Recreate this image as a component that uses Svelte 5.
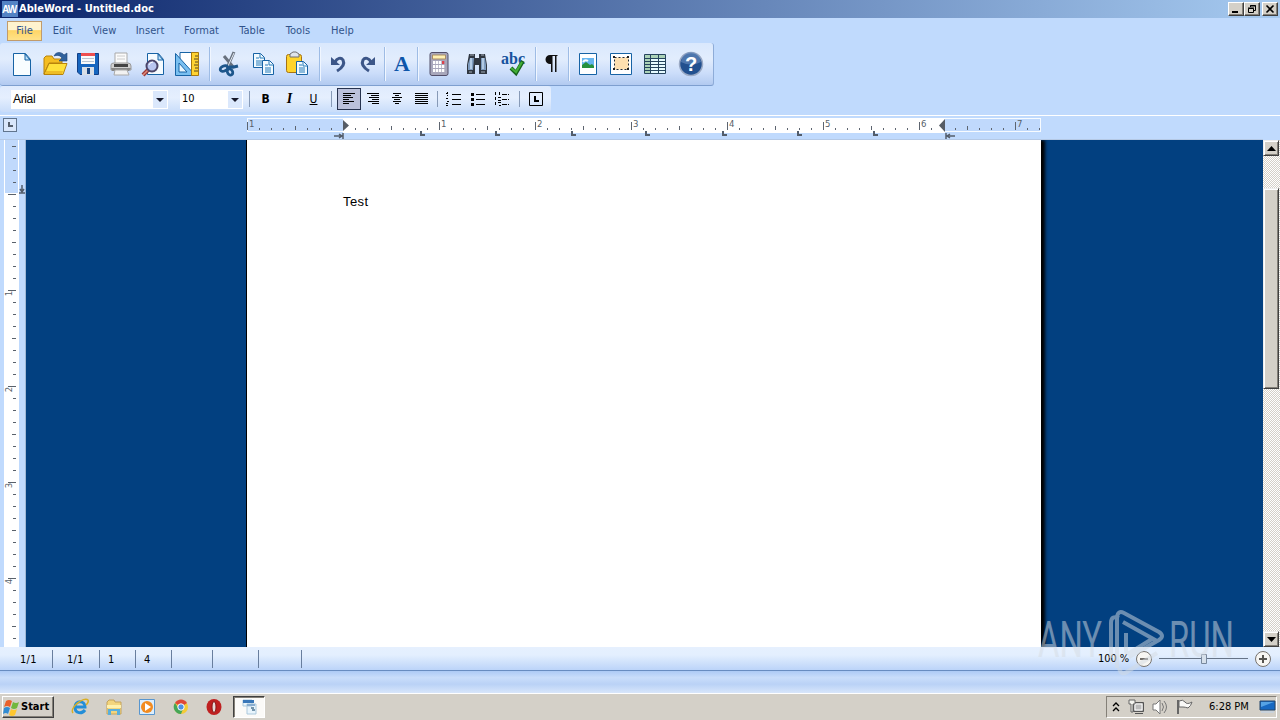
<script lang="ts">
    const menus = [
        { label: 'File', width: 35 },
        { label: 'Edit', width: 41 },
        { label: 'View', width: 43 },
        { label: 'Insert', width: 48 },
        { label: 'Format', width: 55 },
        { label: 'Table', width: 46 },
        { label: 'Tools', width: 46 },
        { label: 'Help', width: 43 }
    ];

    const tools: [string, number][] = [
        ['new', 32], ['open', 34], ['save', 32], ['print', 34], ['preview', 30], ['layout', 38],
        ['sep', 8], ['cut', 32], ['copy', 34], ['paste', 34],
        ['sep', 12], ['undo', 26], ['redo', 30],
        ['sep', 6], ['font', 28],
        ['sep', 4], ['calc', 38], ['find', 38], ['spell', 34],
        ['sep', 12], ['marks', 20],
        ['sep', 14], ['image', 24], ['frame', 42], ['table', 25], ['help', 47]
    ];

    const aligns = [
        { name: 'left', lines: [[0, 12], [0, 8], [0, 10], [0, 6], [0, 11], [0, 6]] },
        { name: 'right', lines: [[0, 12], [4, 12], [2, 12], [5, 12], [1, 12], [5, 12]] },
        { name: 'center', lines: [[2, 10], [4, 8], [1, 11], [3, 9], [2, 10], [4, 8]] },
        { name: 'justify', lines: [[0, 13], [0, 13], [0, 13], [0, 13], [0, 13], [0, 13]] }
    ];

    const tabs = [420, 495, 571, 645, 722, 797, 873];
    const hTicks = Array.from({ length: 67 }, (_, i) => i - 8);
    const vTicks = Array.from({ length: 42 }, (_, i) => i - 4);
    const cells = [
        { text: '1/1', width: 53, pad: 20 },
        { text: '1/1', width: 47, pad: 14 },
        { text: '1', width: 36, pad: 8 },
        { text: '4', width: 36, pad: 8 },
        { text: '', width: 41, pad: 0 },
        { text: '', width: 46, pad: 0 },
        { text: '', width: 43, pad: 0 }
    ];
</script>

{#snippet icon(name: string)}
    <svg width="28" height="28" viewBox="0 0 28 28">
        {#if name === 'new'}
            <path d="M5.5 3.5h12l5 6v16h-17z" fill="#f8fdff" stroke="#1763a5" />
            <path d="M17 4v6h5z" fill="#bfe2fa" stroke="#1763a5" />
        {:else if name === 'open'}
            <path d="M3 8l2-2h6l2 3h8v4H8L3 24z" fill="#f4bd22" stroke="#b8830b" />
            <path d="M3 24.500l5-11h18l-4 11z" fill="#ffe13b" stroke="#b8830b" />
            <path d="M5 21h17l-1 3H4z" fill="#efbd25" />
            <path d="M13 6c2-5 8-4 10-1l3-2v8h-8l3-3c-2-3-5-3-8-2z" fill="#30629d" stroke="#1c4378" stroke-width=".6" />
        {:else if name === 'save'}
            <path d="M3.500 3.500h21v21H6l-2.500-2.500z" fill="#1766bf" stroke="#123f86" />
            <path d="M7 3h14v11H7z" fill="#fafafa" />
            <path d="M7 3h14v3H7z" fill="#ee4f4f" />
            <path d="M8 8.500h12M8 11.500h12" stroke="#bbc5d1" />
            <path d="M8 17h12v8H8z" fill="#d8dee6" />
            <path d="M13 18h3v6h-3z" fill="#174482" />
        {:else if name === 'print'}
            <path d="M8 3h12v11H8z" fill="#fbfbfb" stroke="#a9a9a9" />
            <path d="M10 6h8M10 9h8" stroke="#ccc" />
            <path d="M4 15q0-2 3-2h14q3 0 3 3v4H4z" fill="#d0d0d0" stroke="#999" />
            <path d="M7 14h14v3H7z" fill="#444" />
            <path d="M4 18h20l-2 3H5z" fill="#888" />
            <path d="M8 20h12l2 5H7z" fill="#f2f2f2" stroke="#aaa" />
        {:else if name === 'preview'}
            <path d="M8.500 3.500h11l5 6v15h-16z" fill="#f5fbff" stroke="#1763a5" />
            <path d="M19 4v6h5z" fill="#bfe2fa" stroke="#1763a5" />
            <path d="M9 20l-5 5" stroke="#9b3b39" stroke-width="4" />
            <path d="M9 20l-5 5" stroke="#df8b7d" stroke-width="1.500" />
            <circle cx="13" cy="16" r="5.500" fill="#b9c6f0" stroke="#4b4569" stroke-width="2" />
            <path d="M10 15q1-3 4-3" stroke="#fff" fill="none" />
        {:else if name === 'layout'}
            <path d="M7 2.500h12v22H7z" fill="#fff" stroke="#1763a5" />
            <path d="M2.500 3.500v22h20z" fill="#79bff0" stroke="#1763a5" />
            <path d="M6 13v9h8z" fill="#e9f7ff" stroke="#1763a5" />
            <path d="M18.500 2.500h7v23h-7z" fill="#ffd331" stroke="#a5770f" />
            <path d="M22 6h3M21 9h4M22 12h3M21 15h4M22 18h3M21 21h4" stroke="#584721" />
        {:else if name === 'cut'}
            <path d="M18 2L11 18M8 6l10 12" stroke="#68717e" stroke-width="3" />
            <path d="M18 3l-6 13" stroke="#e1e9f2" />
            <g fill="none" stroke="#1d568b" stroke-width="2.800"><ellipse cx="8" cy="18.500" rx="4" ry="2.500" transform="rotate(-25 8 18.500)" /><ellipse cx="14" cy="22" rx="2.500" ry="3.200" transform="rotate(-35 14 22)" /></g>
            <path d="M13 17h5l4-1" stroke="#1d568b" stroke-width="3" fill="none" />
        {:else if name === 'copy'}
            {#each [[4, 3], [13, 10]] as [x, y]}
                <g transform={`translate(${x} ${y})`}>
                    <path d="M.5.500h7l4 4v10H.500z" fill="#f1faff" stroke="#1763a5" />
                    <path d="M7 1v4h4M3 5h3M3 8h6M3 10h6M3 12h6" fill="none" stroke="#257bb9" />
                </g>
            {/each}
        {:else if name === 'paste'}
            <rect x="3.500" y="4.500" width="15" height="18" rx="2" fill="#ffd42c" stroke="#a67313" />
            <path d="M7 7V4l3-2h3l3 2v3z" fill="#dfe4ec" stroke="#706e71" />
            <path d="M13.500 11.500h7l4 4v9h-11z" fill="#f1faff" stroke="#1763a5" />
            <path d="M20 12v4h4M16 15h3M16 18h6M16 20h6M16 22h6" fill="none" stroke="#257bb9" />
        {:else if name === 'undo' || name === 'redo'}
            <g transform={name === 'redo' ? 'translate(28 0) scale(-1 1)' : ''}>
                <path d="M10 12c2-4 6-5 8-2 2 4-1 8-6 11" fill="none" stroke="#3c5688" stroke-width="3" />
                <path d="M6 7v8h9z" fill="#3c5688" />
            </g>
        {:else if name === 'font'}
            <text x="14" y="21" text-anchor="middle" class="serif" font-size="22" fill="#0d56aa">A</text>
        {:else if name === 'calc'}
            <rect x="5" y="2.500" width="18" height="23" rx="2" fill="#a8a7bb" stroke="#514e69" />
            <path d="M7.500 5h13v4h-13z" fill="#fff0b1" stroke="#aa8d64" />
            {#each [11, 15, 19] as y}
                {#each [8, 11, 14, 17] as x}
                    <rect {x} {y} width="2.300" height="3" fill={x === 17 && y === 11 ? '#dc424d' : '#fff'} />
                {/each}
            {/each}
        {:else if name === 'find'}
            <path d="M6 4h6v4h4V4h6l2 11v9h-8v-9h-4v9H4v-9z" fill="#303741" />
            <path d="M7 8h4l-1 12H5v-6zM18 8h4l1 7v5h-5z" fill="#7f9cbf" />
            <path d="M8 8v11M20 8v11" stroke="#c3d9f0" stroke-width="1.500" />
            <path d="M7 5h4M18 5h3M6 22h3M18 22h4" stroke="#a5afba" />
        {:else if name === 'spell'}
            <text x="2" y="14" class="serif abc" textLength="24" lengthAdjust="spacingAndGlyphs" font-size="17" fill="#17539e">abc</text>
            <path d="M12 18l5 5 7-12" fill="none" stroke="#17621d" stroke-width="4" />
            <path d="M12 18l5 4 6-10" fill="none" stroke="#42af35" stroke-width="2.200" />
        {:else if name === 'marks'}
            <path d="M16 5h-4a4.500 4.500 0 0 0 0 9h1v8h1.500V6H17v16h1.500V6h1V5z" fill="#111" />
        {:else if name === 'image'}
            <path d="M5.500 3.500h17v21h-17z" fill="#fff" stroke="#1763a5" />
            <path d="M8 8h12v10H8z" fill="#66b5ef" />
            <path d="M8 15l4-3 4 3 2-1 2 2v2H8z" fill="#28913e" />
            <path d="M9 12q2-3 5-1" fill="none" stroke="#fff" stroke-width="2" />
        {:else if name === 'frame'}
            <path d="M3.500 3.500h21v21h-21z" fill="#fff" stroke="#1763a5" />
            <path d="M7.500 7.500h14v12h-14z" fill="#ffe0b0" stroke="#222b37" stroke-dasharray="2 2" />
            <path d="M6 6h2v2H6zM20 6h2v2h-2zM6 18h2v2H6zM20 18h2v2h-2z" fill="#222" />
        {:else if name === 'table'}
            <path d="M3.500 4.500h21v19h-21z" fill="#e7fbff" stroke="#26445d" />
            <path d="M4 5h20v3H4zM4 8h5v15H4z" fill="#abd2b7" />
            <path d="M4 8.500h20M4 11.500h20M4 14.500h20M4 17.500h20M4 20.500h20M9.500 5v18M17.500 5v18" stroke="#26445d" />
        {:else if name === 'help'}
            <circle cx="14" cy="14" r="11.500" fill="#22508f" stroke="#9aa9c4" stroke-width="1.500" />
            <path d="M4 12a10 10 0 0 1 20 0q-10 5-20 0z" fill="#668abd" opacity=".65" />
            <text x="14" y="21" text-anchor="middle" class="question">?</text>
        {/if}
    </svg>
{/snippet}

<div class="app">
    <header class="title">
        <span class="logo">AW</span>
        <span class="caption">AbleWord - Untitled.doc</span>
        <div class="window-buttons">
            <button aria-label="Minimize"><svg width="14" height="12"><path d="M3 9h6" stroke="#000" stroke-width="2" /></svg></button>
            <button aria-label="Restore"><svg width="14" height="12"><path d="M5.500 4V2.500h5v5H9M5 3h6M3.500 5.500h5v4h-5zM3 5h6" fill="none" stroke="#000" /></svg></button>
            <button aria-label="Close"><svg width="14" height="12"><path d="M3.500 2.500l7 7M10.500 2.500l-7 7" stroke="#000" stroke-width="1.600" /></svg></button>
        </div>
    </header>

    <nav>
        {#each menus as menu, i}
            <span class:selected={i === 0} style:width={`${menu.width}px`}>{menu.label}</span>
        {/each}
    </nav>

    <div class="toolbar">
        {#each tools as [name, width]}
            <div class="tool" style:width={`${width}px`}>
                {#if name === 'sep'}<i></i>{:else}{@render icon(name)}{/if}
            </div>
        {/each}
    </div>

    <div class="formatbar">
        <div class="combo face"><span>Arial</span><i></i></div>
        <div class="combo size"><span>10</span><i></i></div>
        <div class="divider"></div>
        <span class="style bold">B</span>
        <span class="style italic">I</span>
        <span class="style underline">U</span>
        <div class="divider second"></div>
        {#each aligns as align}
            <span class="align" class:pressed={align.name === 'left'}>
                <svg width="13" height="12">
                    {#each align.lines as line, i}
                        <path d={`M${line[0]} ${i * 2 + .5}H${line[1]}`} stroke="#000" />
                    {/each}
                </svg>
            </span>
        {/each}
        <div class="divider third"></div>
        <svg class="list" width="16" height="14"><path d="M6 2.500h9M6 7.500h9M6 12.500h9" stroke="#000" /><path d="M1.500 0v4M0 1.500h2M0 6.500h3M1 9.500h2M0 11.500h3M0 13.500h3" stroke="#000" stroke-dasharray="2 1" /></svg>
        <svg class="list" width="16" height="14"><path d="M6 2.500h9M6 7.500h9M6 12.500h9" stroke="#000" /><path d="M1 1h3v3H1zM1 6h3v3H1zM1 11h3v3H1z" /></svg>
        <svg class="list" width="16" height="14"><path d="M8 2.500h7M8 7.500h7M8 12.500h7" stroke="#000" stroke-dasharray="5 1" /><path d="M1.500 0v4M5.500 0v4M1.500 5v4M4 5.500h3M4 8.500h3M1.500 10v4M4 10.500h3M5 13.500h2" stroke="#000" stroke-dasharray="3 1" /></svg>
        <div class="divider fourth"></div>
        <svg class="tabbox" width="15" height="14"><path d="M.5.500h13v13H.500z" fill="none" stroke="#000" /><path d="M6 4v5h4" fill="none" stroke="#000" stroke-width="2" /></svg>
    </div>

    <svg class="hruler" width="1280" height="25">
        <path d="M0 .500h1280" stroke="#fff" />
        <rect x="3.500" y="3.500" width="13" height="13" fill="#d9e7fb" stroke="#61758e" />
        <path d="M9 7v4h4" fill="none" stroke="#555f6d" stroke-width="2" />
        <rect x="247.500" y="3.500" width="793" height="13" fill="#c0d9fc" stroke="#f7fbff" />
        <path d="M343 3h602v15H343z" fill="#fff" />
        {#each hTicks as n}
            {@const x = 343.5 + n * 12}
            {#if n !== 0 && n !== 50 && x < 1040}
                <path d={`M${x} ${n % 8 === 0 ? 7 : n % 4 === 0 ? 11 : 13}V15`} stroke="#5d6570" />
                {#if n % 8 === 0}<text x={x + 1.5} y="12">{Math.abs(n / 8)}</text>{/if}
            {/if}
        {/each}
        <path d="M343 5v11l6-5.500z" fill="#565c65" />
        <path d="M945 4v13l-6-6.500z" fill="#565c65" />
        <path d="M334 21h8m-3-2l3 2-3 2m4-5v6M955 21h-8m3-2l-3 2 3 2m-4-5v6" fill="none" stroke="#535d6b" stroke-width="1.500" />
        {#each tabs as x}
            <path d={`M${x + 1} 16v4h4`} fill="none" stroke="#535d6b" stroke-width="2" />
        {/each}
        <path d="M0 24.500h1263" stroke="#b5c9e5" />
    </svg>

    <main>
        <svg class="vruler" width="26" height="507">
            <path d="M4 0h15v507H4z" fill="#fff" />
            <path d="M5 0h13v53H5z" fill="#c0d9fc" />
            {#each vTicks as n}
                {@const y = 54.5 + n * 12}
                <path d={`M${n % 8 === 0 ? 8 : n % 4 === 0 ? 12 : 13} ${y}H16`} stroke="#59616b" />
                {#if n > 0 && n % 8 === 0}<text transform={`translate(12 ${y + 3}) rotate(-90)`} text-anchor="middle">{n / 8}</text>{/if}
            {/each}
            <path d="M22 45v7m-2-3l2 3 2-3m-5 4h6" fill="none" stroke="#535d6b" stroke-width="1.500" />
            <path d="M25.500 0v507" stroke="#9fb8d5" />
        </svg>
        <div class="workspace">
            <article>Test</article>
        </div>
        <div class="scrollbar">
            <span class="scroll-button"><svg width="9" height="5"><path d="M0 5L4.500 0 9 5z" /></svg></span>
            <span class="thumb"></span>
            <span class="scroll-button down"><svg width="9" height="5"><path d="M0 0h9L4.500 5z" /></svg></span>
        </div>
    </main>

    <div class="status">
        {#each cells as cell}
            <span class="cell" style:width={`${cell.width}px`} style:padding-left={`${cell.pad}px`}>{cell.text}</span>
        {/each}
        <div class="zoom">
            <span>100 %</span>
            <svg width="140" height="20">
                <circle cx="13" cy="10" r="7.500" fill="#f7f6f3" stroke="#77736e" />
                <path d="M9 10h8" stroke="#716d69" stroke-width="2" />
                <path d="M28 9.500h89" stroke="#667487" />
                <path d="M70.500 5.500h5v9h-5z" fill="#d6e0eb" stroke="#77889e" />
                <circle cx="132" cy="10" r="7.500" fill="#f7f6f3" stroke="#77736e" />
                <path d="M128 10h8M132 6v8" stroke="#55534f" stroke-width="2" />
            </svg>
        </div>
    </div>
    <div class="hint"></div>

    <footer>
        <div class="start">
            <svg width="17" height="17" viewBox="0 0 17 17">
                <path d="M3 2q3-2 6 0L7 8Q4 6 1 8z" fill="#e9602b" /><path d="M10 3q3 2 6 0l-2 6q-3 2-6 0z" fill="#71b83e" />
                <path d="M1 9q3-2 6 0l-2 6q-2-2-5 0z" fill="#318bd2" /><path d="M8 10q3 2 6 0l-2 6q-3 2-6 0z" fill="#ffc72f" />
            </svg>Start
        </div>
        <div class="launch">
            <svg width="18" height="18"><path d="M4 9h10c0-7-10-7-10 0s7 7 10 3" fill="none" stroke="#238ed8" stroke-width="3" /><path d="M2 15C-2 10 13-2 17 2c1 2-1 4-2 5" fill="none" stroke="#d9af24" stroke-width="1.500" /></svg>
            <svg width="18" height="18"><path d="M2 4l2-2h5l1 2h6v12H2z" fill="#f3d57d" stroke="#c4a35d" /><path d="M2 7h14v3H2z" fill="#fff1ad" /><path d="M3 17v-6h12v6h-3v-4H6v4z" fill="#5aafdc" /></svg>
            <svg width="18" height="18"><path d="M1.500 1.500h15v15h-15z" fill="#dceefd" stroke="#5896cf" /><circle cx="9" cy="9" r="6" fill="#f28b20" /><path d="M7 5l6 4-6 4z" fill="#fff" /></svg>
            <svg width="18" height="18"><circle cx="9" cy="9" r="7" fill="#f4cb37" /><path d="M3 5a7 7 0 0 1 12 0L9 9z" fill="#df4738" /><path d="M3 5a7 7 0 0 0 6 11l2-5-4 0z" fill="#45a657" /><circle cx="9" cy="9" r="3.200" fill="#4f91e4" stroke="#fff" /></svg>
            <svg width="18" height="18"><ellipse cx="9" cy="9" rx="7.500" ry="8" fill="#bf2020" /><ellipse cx="9" cy="9" rx="2" ry="5.500" fill="#e7dbd8" stroke="#861414" /></svg>
        </div>
        <div class="task">
            <svg width="16" height="16"><path d="M2 1h9v6H2zM6 5h9v10H6z" fill="#e8f4fc" stroke="#abc8dc" /><path d="M2 1h11v3H2z" fill="#3977b9" /><path d="M6 5h8v2H6z" fill="#8aaed0" /><path d="M10 9h3M11 11h3" stroke="#7394ac" stroke-width="2" /></svg>
        </div>
        <div class="tray">
            <svg width="10" height="12"><path d="M2 5l3-3 3 3M2 10l3-3 3 3" fill="none" stroke="#000" stroke-width="1.300" /></svg>
            <svg class="network" width="18" height="18"><path d="M5.500 4.500h10v9h-10z" fill="#aaa" stroke="#555" /><path d="M7 6h7v6H7z" fill="#bbb" stroke="#fff" /><path d="M1 2h6v4H5v8H3V6H1z" fill="#f4f4ef" stroke="#666" /><path d="M7 15.500h8" stroke="#555" /></svg>
            <svg class="sound" width="18" height="18"><path d="M1 6h3l4-4v14l-4-4H1z" fill="#fff" stroke="#777" /><path d="M10 5q3 4 0 8M12 3q5 6 0 12" fill="none" stroke="#777" /></svg>
            <svg class="flag" width="18" height="18"><path d="M2 2v14" stroke="#666" stroke-width="2" /><path d="M3 3q4-2 6 1t7 0q-1 4-4 6-3-1-5-1H3z" fill="#f9f9f7" stroke="#666" /></svg>
            <time>6:28 PM</time>
            <svg class="desktop" width="18" height="16"><path d="M1 2h15v9H1z" fill="#1769c2" stroke="#24466a" /><path d="M2 3h13L2 8z" fill="#55a3e5" /><path d="M2 13h13" stroke="#c9d2db" stroke-width="2" /></svg>
        </div>
    </footer>

    <svg class="watermark" width="210" height="72" viewBox="0 0 210 72" aria-label="ANY RUN">
        <text x="2" y="50" textLength="64" lengthAdjust="spacingAndGlyphs">ANY</text>
        <text x="133" y="50" textLength="65" lengthAdjust="spacingAndGlyphs">RUN</text>
        <path d="M83 11q-8-3-8 5v35" />
        <path d="M81 61V10q1-7 7-4l35 19q6 4 0 8L93 50" />
        <path d="M87 15l34 19M90 26v17q0 5 5 2l21-13M83 61q2 8 8 4l30-19" />
    </svg>
</div>

<style>
    :global(body) {
        overflow: hidden;
        background: #c0dafd;
    }

    .app {
        display: flex;
        flex-direction: column;
        position: relative;
        width: 1280px;
        height: 720px;
        font-family: "DejaVu Sans Condensed", "DejaVu Sans", sans-serif;
        font-size: 11px;
        font-stretch: condensed;
        line-height: 14px;
    }

    svg {
        display: block;
        flex: none;
        overflow: visible;
    }

    .title {
        display: flex;
        align-items: center;
        flex: none;
        height: 18px;
        background: linear-gradient(90deg, #0a246a, #a6caf0);
        color: #fff;
    }

    .logo {
        width: 16px;
        height: 16px;
        margin-left: 2px;
        background: #5383c4;
        font: bold 10px/17px "Liberation Sans", sans-serif;
        letter-spacing: -.8px;
    }

    .caption {
        margin-left: 1px;
        font-weight: bold;
        white-space: nowrap;
        letter-spacing: .05px;
    }

    .window-buttons {
        display: flex;
        margin-left: auto;
        margin-right: 2px;
    }

    .window-buttons button {
        width: 16px;
        height: 14px;
        padding: 0;
        border: 1px solid;
        border-color: #fff #404040 #404040 #fff;
        background: #d4d0c8;
        box-shadow: inset -1px -1px #848078;
    }

    .window-buttons button:last-child {
        margin-left: 2px;
    }

    nav {
        display: flex;
        flex: none;
        height: 25px;
        padding: 3px 7px 0;
        box-sizing: border-box;
        color: #30538b;
        letter-spacing: .05px;
    }

    nav span {
        height: 20px;
        line-height: 20px;
        text-align: center;
        box-sizing: border-box;
    }

    nav .selected {
        border: 1px solid #c19b6c;
        line-height: 18px;
        background: linear-gradient(#fff3ce 0 43%, #ffd566 48%, #ffe28a);
    }

    .toolbar {
        display: flex;
        align-items: center;
        flex: none;
        width: 714px;
        height: 43px;
        padding-left: 6px;
        box-sizing: border-box;
        border-right: 1px solid #8eacd8;
        border-bottom: 1px solid #7e9fcf;
        border-radius: 3px;
        background: linear-gradient(#dae8fd, #e2edfd 38%, #cbddfa 72%, #b2caf0);
    }

    .tool {
        display: flex;
        justify-content: center;
        flex: none;
    }

    .tool i {
        width: 1px;
        height: 34px;
        background: #9ebce5;
        border-right: 1px solid #f0f6ff;
    }

    .serif {
        font-family: "Liberation Serif", serif;
        font-weight: bold;
    }

    .question {
        font: bold 20px "Liberation Sans", sans-serif;
        fill: #fff;
    }

    .formatbar {
        display: flex;
        align-items: center;
        flex: none;
        width: 551px;
        height: 26px;
        margin: 0 0 2px;
        padding-left: 11px;
        box-sizing: border-box;
        border-radius: 3px;
        background: linear-gradient(#dfebfd, #e5effe 45%, #c9ddfa);
    }

    .combo {
        display: flex;
        flex: none;
        height: 19px;
        background: #fff;
    }

    .combo span {
        flex: 1;
        padding-left: 2px;
        line-height: 19px;
    }

    .combo i {
        width: 14px;
        border: 1px solid #fff;
        background: #dbe8fc;
    }

    .combo i::after {
        content: "";
        display: block;
        width: 0;
        margin: 7px 3px;
        border: 4px solid transparent;
        border-top-color: #17182a;
        border-bottom: 0;
    }

    .face {
        width: 157px;
        font-family: "Liberation Sans", sans-serif;
        font-size: 12px;
        letter-spacing: -.35px;
    }

    .size {
        width: 63px;
        margin-left: 12px;
    }

    .size span {
        line-height: 18px;
    }

    .divider {
        flex: none;
        width: 1px;
        height: 16px;
        margin: 0 6px;
        background: #879ab7;
    }

    .style {
        width: 19px;
        margin-right: 5px;
        text-align: center;
        font-weight: bold;
    }

    .bold {
        font-size: 12px;
    }

    .italic {
        font-family: "Liberation Serif", serif;
        font-style: italic;
        font-size: 14px;
    }

    .underline {
        font-size: 12px;
        font-weight: normal;
        text-decoration: underline;
    }

    .divider.second { margin: 0 5px 0 3px; }

    .align {
        display: grid;
        place-items: center;
        flex: none;
        width: 24px;
        height: 22px;
        box-sizing: border-box;
    }

    .pressed {
        border: 1px solid #27334f;
        background: #bbc1db;
    }

    .divider.third { margin: 0 8px 0 4px; }
    .list { margin-right: 8px; }
    .divider.fourth { margin: 0 9px 0 1px; }

    .hruler {
        margin-top: 1px;
        height: 25px;
    }

    .hruler text,
    .vruler text {
        font: 9.5px "DejaVu Sans Condensed", "DejaVu Sans", sans-serif;
        fill: #575f69;
    }

    main {
        display: flex;
        flex: none;
        height: 507px;
    }

    .workspace {
        flex: 1;
        padding-left: 220px;
        background: #024080;
    }

    article {
        width: 795px;
        height: 507px;
        padding: 54px 0 0 96px;
        box-sizing: border-box;
        border-left: 1px solid #000;
        background: #fff;
        box-shadow: 4px 0 3px #000;
        clip-path: inset(0 -10px 0 0);
        font: 13px/16px "Liberation Sans", sans-serif;
        letter-spacing: .4px;
    }

    .scrollbar {
        width: 17px;
        background: repeating-conic-gradient(#fff 0 25%, #d4d0c8 0 50%) 0 0 / 2px 2px;
        display: flex;
        flex-direction: column;
    }

    .scroll-button,
    .thumb {
        display: grid;
        place-items: center;
        width: 16px;
        height: 16px;
        box-sizing: border-box;
        border: 1px solid;
        border-color: #eee #404040 #404040 #eee;
        background: #d4d0c8;
        box-shadow: inset 1px 1px #fff, inset -1px -1px #848078;
    }

    .thumb {
        height: 201px;
        margin-top: 32px;
    }

    .down {
        margin-top: auto;
    }

    .status {
        display: flex;
        flex: none;
        height: 24px;
        box-sizing: border-box;
        border-bottom: 1px solid #688cc0;
        background: linear-gradient(#e6f0fe, #e3effe 35%, #bcd4f9);
    }

    .cell {
        height: 18px;
        margin-top: 3px;
        line-height: 19px;
        border-right: 1px solid #687e9e;
        box-sizing: border-box;
        letter-spacing: .3px;
    }

    .zoom {
        display: flex;
        align-items: center;
        margin-left: auto;
        margin-right: 9px;
        gap: 2px;
        line-height: 18px;
    }

    .zoom span {
        letter-spacing: -.1px;
    }

    .hint {
        flex: none;
        height: 22px;
        background: linear-gradient(#adcaf5, #c9ddfa 30%, #bad2f6 60%, #d8e6fb);
    }

    footer {
        display: flex;
        flex: none;
        align-items: center;
        height: 27px;
        box-sizing: border-box;
        border-top: 1px solid #fff;
        background: #d4d0c8;
    }

    .start {
        display: flex;
        align-items: center;
        gap: 1px;
        width: 52px;
        height: 22px;
        margin-left: 2px;
        box-sizing: border-box;
        border: 1px solid;
        border-color: #fff #404040 #404040 #fff;
        box-shadow: inset -1px -1px #848078;
        font-weight: bold;
    }

    .launch {
        display: flex;
        gap: 15.5px;
        margin-left: 17px;
    }

    .task {
        display: grid;
        place-items: center;
        width: 32px;
        height: 22px;
        margin-left: 9.5px;
        box-sizing: border-box;
        border: 1px solid;
        border-color: #404040 #fff #fff #404040;
        box-shadow: inset 1px 1px #848078;
        background: #fbfaf8;
    }

    .tray {
        display: flex;
        align-items: center;
        width: 171px;
        height: 22px;
        margin-left: auto;
        margin-right: 3px;
        padding-left: 4px;
        box-sizing: border-box;
        border: 1px solid;
        border-color: #848078 #fff #fff #848078;
    }

    .network { margin-left: 7px; }
    .sound { margin-left: 6px; }
    .flag { margin-left: 6px; }

    time {
        width: 42px;
        margin-left: 15px;
        white-space: nowrap;
    }

    .desktop { margin-left: 10px; }

    .watermark {
        position: absolute;
        left: 1036px;
        top: 607px;
        opacity: .5;
        pointer-events: none;
    }

    .watermark text {
        font: 50px Roboto, sans-serif;
        fill: #d5dce3;
    }

    .watermark path {
        fill: none;
        stroke: #d5dce3;
        stroke-width: 4;
    }
</style>
